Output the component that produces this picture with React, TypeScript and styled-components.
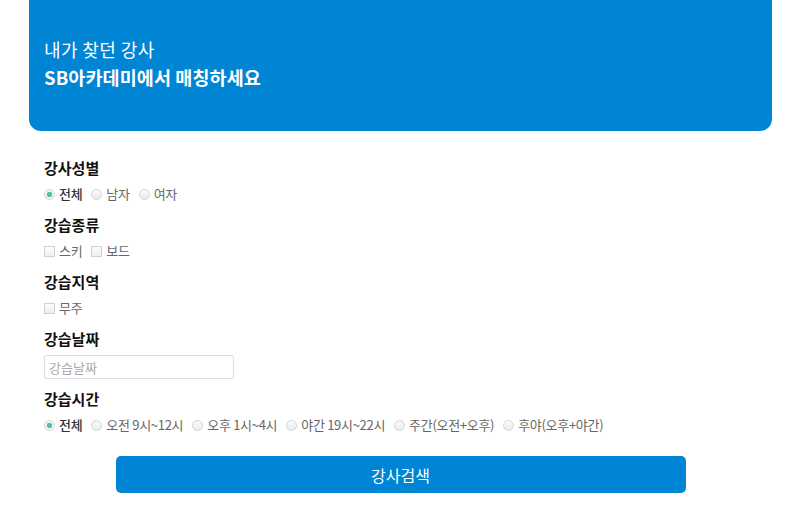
import React, {useState} from 'react';
import styled, {createGlobalStyle} from 'styled-components';

const GlobalStyle = createGlobalStyle`
    body {
        margin: 0;
        background: #fff;
        font-family: "Noto Sans CJK KR", "Noto Sans", sans-serif;
    }
`

const genders = ['전체', '남자', '여자']
const kinds = ['스키', '보드']
const areas = ['무주']
const times = ['전체', '오전 9시~12시', '오후 1시~4시', '야간 19시~22시', '주간(오전+오후)', '후야(오후+야간)']

function App() {
    const [gender, setGender] = useState('전체')
    const [time, setTime] = useState('전체')

    return (
        <Page>
            <GlobalStyle/>
            <Banner>
                <BannerSub>내가 찾던 강사</BannerSub>
                <BannerMain>SB아카데미에서 매칭하세요</BannerMain>
            </Banner>

            <Form>
                <Section>
                    <Title>강사성별</Title>
                    <OptionRow>
                        {genders.map(g =>
                            <Option key={g} onClick={() => setGender(g)}>
                                <Radio $checked={gender === g}/>
                                <Label $checked={gender === g}>{g}</Label>
                            </Option>
                        )}
                    </OptionRow>
                </Section>

                <Section>
                    <Title>강습종류</Title>
                    <OptionRow>
                        {kinds.map(k =>
                            <Option key={k}>
                                <Check/>
                                <Label>{k}</Label>
                            </Option>
                        )}
                    </OptionRow>
                </Section>

                <Section>
                    <Title>강습지역</Title>
                    <OptionRow>
                        {areas.map(a =>
                            <Option key={a}>
                                <Check/>
                                <Label>{a}</Label>
                            </Option>
                        )}
                    </OptionRow>
                </Section>

                <Section $space={10}>
                    <Title>강습날짜</Title>
                    <DateInput placeholder="강습날짜"/>
                </Section>

                <Section>
                    <Title>강습시간</Title>
                    <OptionRow>
                        {times.map(t =>
                            <Option key={t} onClick={() => setTime(t)}>
                                <Radio $checked={time === t}/>
                                <Label $checked={time === t}>{t}</Label>
                            </Option>
                        )}
                    </OptionRow>
                </Section>

                <ButtonRow>
                    <SearchButton>강사검색</SearchButton>
                </ButtonRow>
            </Form>
        </Page>
    );
}

const Page = styled.div`
    padding: 0 28px 0 29px;
`

const Banner = styled.div`
    height: 131px;
    box-sizing: border-box;
    padding: 36px 15px 0;
    background: #0085d5;
    border-radius: 0 0 12px 12px;
    color: #fff;
`

const BannerSub = styled.div`
    font-size: 18px;
    line-height: 27px;
    font-weight: 400;
    letter-spacing: 0.4px;
`

const BannerMain = styled.div`
    font-size: 18.5px;
    line-height: 28px;
    font-weight: 700;
    letter-spacing: 0.1px;
`

const Form = styled.div`
    padding: 27px 15px 0;
    display: flex;
    flex-direction: column;
`

const Section = styled.div<{ $space?: number }>`
    display: flex;
    flex-direction: column;
    align-items: flex-start;
    margin-bottom: ${p => p.$space ?? 12}px;
`

const Title = styled.div`
    font-size: 15px;
    line-height: 20px;
    font-weight: 700;
    color: #111;
    margin-bottom: 7px;
`

const OptionRow = styled.div`
    display: flex;
    align-items: center;
    gap: 9px;
    height: 18px;
`

const Option = styled.label`
    display: flex;
    align-items: center;
    gap: 4px;
    cursor: pointer;
`

const Radio = styled.span<{ $checked?: boolean }>`
    width: 11px;
    height: 11px;
    box-sizing: border-box;
    border-radius: 50%;
    border: 1px solid #d4d4d4;
    background: ${p => p.$checked
        ? 'radial-gradient(circle, #4fbfa5 0 2.5px, #f4f4f4 3px)'
        : 'linear-gradient(#fafafa, #ececec)'};
`

const Check = styled.span`
    width: 11px;
    height: 11px;
    box-sizing: border-box;
    border: 1px solid #d0d0d0;
    background: linear-gradient(#fcfcfc, #efefef);
`

const Label = styled.span<{ $checked?: boolean }>`
    font-size: 13px;
    line-height: 18px;
    letter-spacing: -0.3px;
    color: ${p => p.$checked ? '#333' : '#666'};
    font-weight: ${p => p.$checked ? 500 : 400};
`

const DateInput = styled.input`
    width: 190px;
    height: 24px;
    box-sizing: border-box;
    margin-top: -1px;
    border: 1px solid #ddd;
    border-radius: 2px;
    padding: 0 4px;
    font-family: inherit;
    font-size: 13px;
    color: #333;
    outline: none;

    &::placeholder {
        color: #aaa;
    }
`

const ButtonRow = styled.div`
    display: flex;
    justify-content: center;
    padding-top: 10px;
`

const SearchButton = styled.button`
    width: 570px;
    height: 37px;
    border: none;
    border-radius: 5px;
    background: #0085d5;
    color: #fff;
    font-family: inherit;
    font-size: 16px;
    font-weight: 400;
    cursor: pointer;
`

export default App;
